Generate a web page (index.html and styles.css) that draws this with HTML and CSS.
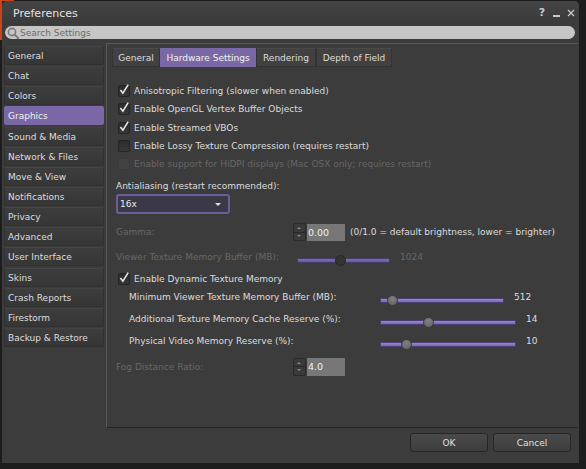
FILE: index.html
```html
<!DOCTYPE html>
<html>
<head>
<meta charset="utf-8">
<title>Preferences</title>
<link rel="stylesheet" href="styles.css">
</head>
<body>
<div class="desktop">
  <div class="window">
    <div class="titlebar">
      <span class="title">Preferences</span>
      <div class="ctrls">
        <span class="ctrl-help">?</span>
        <span class="ctrl-min"></span>
        <svg class="ctrl-close" width="8" height="8" viewBox="0 0 8 8"><path d="M1 1L7 7M7 1L1 7" stroke="#c8c8c8" stroke-width="1.3" fill="none"/></svg>
      </div>
    </div>
    <div class="search">
      <svg class="search-icon" width="12" height="12" viewBox="0 0 12 12"><circle cx="5" cy="5" r="3.6" stroke="#7a7a7a" stroke-width="1.6" fill="none"/><path d="M7.6 7.6L11 11" stroke="#7a7a7a" stroke-width="2" stroke-linecap="round"/></svg>
      <span class="search-ph">Search Settings</span>
    </div>
    <div class="main">
      <ul class="sidebar">
        <li class="item">General</li>
        <li class="item">Chat</li>
        <li class="item">Colors</li>
        <li class="item active">Graphics</li>
        <li class="item">Sound &amp; Media</li>
        <li class="item">Network &amp; Files</li>
        <li class="item">Move &amp; View</li>
        <li class="item">Notifications</li>
        <li class="item">Privacy</li>
        <li class="item">Advanced</li>
        <li class="item">User Interface</li>
        <li class="item">Skins</li>
        <li class="item">Crash Reports</li>
        <li class="item">Firestorm</li>
        <li class="item">Backup &amp; Restore</li>
      </ul>
      <div class="panel">
        <div class="tabs">
          <div class="tab tab-general">General</div>
          <div class="tab tab-hw active">Hardware Settings</div>
          <div class="tab tab-render">Rendering</div>
          <div class="tab tab-dof">Depth of Field</div>
        </div>
        <div class="content">
          <div class="checks">
            <div class="row cbrow"><span class="cb"><svg width="12" height="12" viewBox="0 0 12 12"><polyline points="2.4,6 4.9,9.2 10.2,0.6" stroke="#e6e6e6" stroke-width="1.6" fill="none"/></svg></span><span>Anisotropic Filtering (slower when enabled)</span></div>
            <div class="row cbrow"><span class="cb"><svg width="12" height="12" viewBox="0 0 12 12"><polyline points="2.4,6 4.9,9.2 10.2,0.6" stroke="#e6e6e6" stroke-width="1.6" fill="none"/></svg></span><span>Enable OpenGL Vertex Buffer Objects</span></div>
            <div class="row cbrow"><span class="cb"><svg width="12" height="12" viewBox="0 0 12 12"><polyline points="2.4,6 4.9,9.2 10.2,0.6" stroke="#e6e6e6" stroke-width="1.6" fill="none"/></svg></span><span>Enable Streamed VBOs</span></div>
            <div class="row cbrow"><span class="cb"></span><span>Enable Lossy Texture Compression (requires restart)</span></div>
            <div class="row cbrow disabled"><span class="cb cb-dis"></span><span>Enable support for HiDPI displays (Mac OSX only; requires restart)</span></div>
          </div>
          <div class="row aa-label">Antialiasing (restart recommended):</div>
          <div class="dropdown"><span>16x</span><span class="dd-arrow"></span></div>
          <div class="row gamma-row">
            <span class="lbl lbl-spin disabled">Gamma:</span>
            <span class="spinner"><span class="sp-up"></span><span class="sp-down"></span></span>
            <span class="numbox">0.00</span>
            <span class="hint">(0/1.0 = default brightness, lower = brighter)</span>
          </div>
          <div class="row vtm-row">
            <span class="lbl lbl-vtm disabled">Viewer Texture Memory Buffer (MB):</span>
            <span class="slider slider-vtm dis"><span class="track"></span><span class="knob" style="left:38px"></span></span>
            <span class="val disabled">1024</span>
          </div>
          <div class="row cbrow dyn-row"><span class="cb"><svg width="12" height="12" viewBox="0 0 12 12"><polyline points="2.4,6 4.9,9.2 10.2,0.6" stroke="#e6e6e6" stroke-width="1.6" fill="none"/></svg></span><span>Enable Dynamic Texture Memory</span></div>
          <div class="row sub-row min-row">
            <span class="lbl lbl-sub">Minimum Viewer Texture Memory Buffer (MB):</span>
            <span class="slider slider-min"><span class="track"></span><span class="knob" style="left:7px"></span></span>
            <span class="val">512</span>
          </div>
          <div class="row sub-row">
            <span class="lbl lbl-sub">Additional Texture Memory Cache Reserve (%):</span>
            <span class="slider slider-wide"><span class="track"></span><span class="knob" style="left:43px"></span></span>
            <span class="val">14</span>
          </div>
          <div class="row sub-row">
            <span class="lbl lbl-sub">Physical Video Memory Reserve (%):</span>
            <span class="slider slider-wide"><span class="track"></span><span class="knob" style="left:21px"></span></span>
            <span class="val">10</span>
          </div>
          <div class="row fog-row">
            <span class="lbl lbl-spin disabled">Fog Distance Ratio:</span>
            <span class="spinner"><span class="sp-up"></span><span class="sp-down"></span></span>
            <span class="numbox">4.0</span>
          </div>
        </div>
      </div>
    </div>
    <div class="footer">
      <button class="btn">OK</button>
      <button class="btn">Cancel</button>
    </div>
  </div>
</div>
</body>
</html>
```

FILE: styles.css
```css
* { box-sizing: border-box; margin: 0; padding: 0; }
html, body { height: 100%; }
body {
  background: #1d1d1d;
  font-family: "DejaVu Sans", "Liberation Sans", sans-serif;
  font-size: 9px;
  color: #dcdcdc;
  overflow: hidden;
}
.desktop {
  height: 100%;
  padding: 1px 0 0 2px;
  background:
    linear-gradient(#c9431b, #c9431b) 0 0 / 2px 40px no-repeat,
    linear-gradient(#c9431b, #c9431b) 0 0 / 14px 1px no-repeat,
    #1d1d1d;
}
.window {
  width: 577px;
  height: 462px;
  background: #3c3c3c;
  border-radius: 5px 5px 0 0;
  display: flex;
  flex-direction: column;
}
.titlebar {
  height: 24px;
  flex: none;
  display: flex;
  align-items: center;
  justify-content: space-between;
  padding: 0 4px 0 11px;
  background: linear-gradient(#444444, #3a3a3a);
  border-radius: 5px 5px 0 0;
}
.title { font-size: 11px; color: #e2e2e2; }
.ctrls { display: flex; align-items: center; gap: 7px; }
.ctrl-help { width: 8px; font-size: 11px; font-weight: bold; color: #c8c8c8; line-height: 10px; text-align: center; }
.ctrl-min { width: 7px; height: 2px; background: #c8c8c8; margin-top: 6px; }
.ctrl-close { display: block; }

.search {
  flex: none;
  height: 13px;
  margin: 1px 4px 0 3px;
  border-radius: 7px;
  background: #c6c6c6;
  display: flex;
  align-items: center;
  padding-left: 2px;
}
.search-icon { display: block; margin-right: 1px; }
.search-ph { color: #6c6c6c; }

.main {
  flex: none;
  height: 385px;
  margin-top: 4px;
  display: flex;
}
.sidebar {
  list-style: none;
  width: 104px;
  flex: none;
  padding: 3px 0 0 2px;
  display: flex;
  flex-direction: column;
  gap: 1.15px;
}
.item {
  width: 100px;
  height: 19px;
  line-height: 18px;
  padding-left: 3px;
  background: linear-gradient(#3d3d3d, #363636);
  border: 1px solid #303030;
  border-top-color: #434343;
  border-radius: 2px;
  color: #dedede;
}
.item.active {
  background: #7a68a6;
  border-color: #7a68a6;
  color: #f0f0f0;
}
.panel {
  flex: 1;
  margin-right: 1px;
  border: 1px solid #262626;
  border-top-color: #585858;
  border-left-color: #585858;
  border-right-color: #3c3c3c;
  display: flex;
  flex-direction: column;
}
.tabs { display: flex; padding: 4px 0 0 5px; }
.tab {
  height: 19px;
  line-height: 18px;
  text-align: center;
  background: #414141;
  border: 1px solid #333333;
  border-top-color: #4a4a4a;
  color: #dedede;
}
.tab.active { background: #7a68a6; border-color: #7a68a6; color: #f2f2f2; }
.tab-general { width: 48px; }
.tab-hw { width: 96px; }
.tab-render { width: 60px; }
.tab-dof { width: 76px; }

.content { padding: 15px 0 0 9px; display: flex; flex-direction: column; }
.row { display: flex; align-items: center; height: 18px; white-space: nowrap; }
.cbrow { height: 18.25px; }
.disabled { color: #676767; }
.cb {
  width: 12px;
  height: 12px;
  margin: 0 4px 0 2px;
  flex: none;
  background: linear-gradient(#2c2c2c, #383838);
  border: 1px solid #242424;
  border-radius: 2px;
  position: relative;
}
.cb svg { position: absolute; left: -1px; top: -2px; overflow: visible; }
.cb-dis { background: #414141; border-color: #3a3a3a; }

.aa-label { margin-top: 4px; height: 17px; }
.dropdown {
  width: 114px;
  height: 20px;
  margin-top: 0px;
  border: 2px solid #6c5d98;
  border-radius: 3px;
  background: #3b3848;
  display: flex;
  align-items: center;
  justify-content: space-between;
  padding: 0 7px 0 2px;
  color: #e8e8e8;
}
.dd-arrow {
  width: 0; height: 0;
  border-left: 3.5px solid transparent;
  border-right: 3.5px solid transparent;
  border-top: 3.5px solid #e0e0e0;
  margin-top: 1px;
}
.gamma-row { margin-top: 9px; }
.lbl { flex: none; }
.lbl-spin { width: 177px; }
.spinner {
  width: 13px;
  height: 18px;
  flex: none;
  display: flex;
  flex-direction: column;
  background: #3a3a3a;
  border: 1px solid #2a2a2a;
  border-radius: 2px;
}
.sp-up, .sp-down { flex: 1; position: relative; }
.sp-up { border-bottom: 1px solid #2a2a2a; }
.sp-up::after, .sp-down::after {
  content: "";
  position: absolute;
  left: 3px;
  top: 3px;
  border-left: 2.5px solid transparent;
  border-right: 2.5px solid transparent;
}
.sp-up::after { border-bottom: 2.5px solid #8a8a8a; }
.sp-down::after { border-top: 2.5px solid #8a8a8a; top: 2px; }
.numbox {
  width: 38px;
  height: 17.5px;
  margin-left: 1px;
  flex: none;
  background: #777777;
  color: #f0f0f0;
  padding-left: 1px;
  line-height: 18px;
  font-size: 9.5px;
}
.hint { margin-left: 5px; }

.vtm-row { margin-top: 6.5px; }
.lbl-vtm { width: 181px; }
.slider { position: relative; height: 11px; margin-top: 7px; flex: none; }
.slider-vtm { width: 93px; }
.slider-min { width: 124px; }
.slider-wide { width: 136px; }
.track {
  position: absolute;
  left: 0; right: 0; top: 3px;
  height: 5px;
  background: linear-gradient(#9c89c8, #7b67aa);
  border: 1px solid #4d3f75;
  border-radius: 1px;
}
.dis .track { background: linear-gradient(#7e6da8, #6a5a96); border-color: #463a68; }
.knob {
  position: absolute;
  top: 0;
  width: 11px;
  height: 11px;
  border-radius: 50%;
  background: radial-gradient(circle at 50% 35%, #808080, #606060);
  border: 1px solid #3c3c3c;
}
.dis .knob { background: #353535; border-color: #262626; }
.val { margin-left: 10px; }

.dyn-row { margin-top: 4px; height: 18px; }
.sub-row { margin-top: 4px; padding-left: 13px; }
.min-row { margin-top: 0; }
.lbl-sub { width: 251px; }
.fog-row { margin-top: 8px; }

.footer {
  flex: none;
  display: flex;
  justify-content: flex-end;
  gap: 5px;
  padding: 5px 8px 0 0;
}
.btn {
  width: 78px;
  height: 19px;
  font-family: inherit;
  font-size: 9px;
  color: #e0e0e0;
  background: linear-gradient(#4a4a4a, #3d3d3d);
  border: 1px solid #262626;
  border-radius: 3px;
}
```
